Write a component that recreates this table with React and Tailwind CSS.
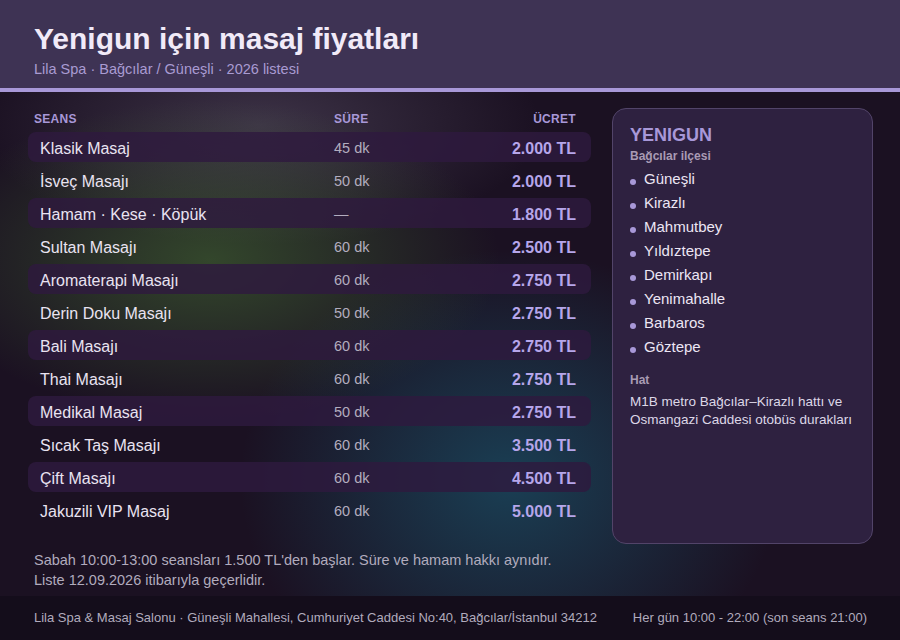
const seanslar = [
  { ad: "Klasik Masaj", sure: "45 dk", ucret: "2.000 TL" },
  { ad: "İsveç Masajı", sure: "50 dk", ucret: "2.000 TL" },
  { ad: "Hamam · Kese · Köpük", sure: "—", ucret: "1.800 TL" },
  { ad: "Sultan Masajı", sure: "60 dk", ucret: "2.500 TL" },
  { ad: "Aromaterapi Masajı", sure: "60 dk", ucret: "2.750 TL" },
  { ad: "Derin Doku Masajı", sure: "50 dk", ucret: "2.750 TL" },
  { ad: "Bali Masajı", sure: "60 dk", ucret: "2.750 TL" },
  { ad: "Thai Masajı", sure: "60 dk", ucret: "2.750 TL" },
  { ad: "Medikal Masaj", sure: "50 dk", ucret: "2.750 TL" },
  { ad: "Sıcak Taş Masajı", sure: "60 dk", ucret: "3.500 TL" },
  { ad: "Çift Masajı", sure: "60 dk", ucret: "4.500 TL" },
  { ad: "Jakuzili VIP Masaj", sure: "60 dk", ucret: "5.000 TL" },
];

const mahalleler = ["Güneşli", "Kirazlı", "Mahmutbey", "Yıldıztepe", "Demirkapı", "Yenimahalle", "Barbaros", "Göztepe"];

export default function App() {
  return (
    <div
      className="w-[900px] h-[640px] flex flex-col overflow-hidden bg-[#1b1122] bg-[radial-gradient(ellipse_290px_160px_at_210px_260px,rgba(80,135,55,0.45),transparent),radial-gradient(ellipse_270px_230px_at_510px_480px,rgba(25,100,125,0.55),transparent),radial-gradient(ellipse_280px_120px_at_260px_125px,rgba(115,105,130,0.38),transparent)]"
      style={{ fontFamily: '"Liberation Sans", Arial, sans-serif' }}
    >
      <header className="h-[88px] shrink-0 bg-[#3e3354] px-[34px] pt-[22px]">
        <h1 className="text-[30px] leading-[34px] font-bold text-[#f1eaf8]">Yenigun için masaj fiyatları</h1>
        <p className="mt-[3px] text-[14.5px] leading-[20px] text-[#a99bd2]">Lila Spa · Bağcılar / Güneşli · 2026 listesi</p>
      </header>
      <div className="h-[4px] shrink-0 bg-[#a898d8]" />

      <main className="flex-1 flex flex-col pl-[28px] pr-[27px] pt-[16px]">
        <div className="flex gap-[21px]">
          <section className="flex-1">
            <div className="flex items-start h-[24px] pt-[3px] pl-[6px] pr-[15px] text-[12px] leading-[16px] font-bold tracking-[0.3px] text-[#a898d8]">
              <span className="w-[300px]">SEANS</span>
              <span className="flex-1">SÜRE</span>
              <span>ÜCRET</span>
            </div>
            <div className="flex flex-col gap-[3px]">
              {seanslar.map((s, i) => (
                <div
                  key={s.ad}
                  className={
                    "flex items-center h-[30px] pt-[4px] pl-3 pr-[15px] rounded-lg " +
                    (i % 2 === 0 ? "bg-[rgba(46,26,62,0.82)]" : "")
                  }
                >
                  <span className="w-[294px] text-[16px] text-[#e9e3f1]">{s.ad}</span>
                  <span className="flex-1 text-[14.5px] text-[#b3adbf]">{s.sure}</span>
                  <span className="text-[16px] font-bold text-[#b6a6ea]">{s.ucret}</span>
                </div>
              ))}
            </div>
          </section>

          <aside className="w-[261px] h-[436px] rounded-[14px] border border-[#524469] bg-[#2e2140] px-[17px] pt-[14px]">
            <h2 className="text-[18px] leading-[24px] font-bold text-[#a898d8]">YENIGUN</h2>
            <p className="mt-px text-[12px] leading-[16px] font-bold text-[#a99bb4]">Bağcılar ilçesi</p>
            <ul className="mt-[3px]">
              {mahalleler.map((m) => (
                <li key={m} className="flex items-center gap-2 h-[24px] text-[15px] text-[#ece6f4]">
                  <span className="w-1.5 h-1.5 mt-[6px] rounded-full bg-[#a898d8] shrink-0" />
                  {m}
                </li>
              ))}
            </ul>
            <p className="mt-[13px] text-[12px] leading-[16px] font-bold text-[#a99bb4]">Hat</p>
            <p className="mt-[5px] text-[13.5px] leading-[18px] text-[#ddd7e7]">
              M1B metro Bağcılar–Kirazlı hattı ve Osmangazi Caddesi otobüs durakları
            </p>
          </aside>
        </div>

        <div className="mt-[6px] pl-[6px] text-[14.5px] leading-[20px] text-[#b1abbd]">
          <p>Sabah 10:00-13:00 seansları 1.500 TL'den başlar. Süre ve hamam hakkı aynıdır.</p>
          <p>Liste 12.09.2026 itibarıyla geçerlidir.</p>
        </div>
      </main>

      <footer className="h-[44px] shrink-0 bg-[#140d1b] flex items-center justify-between pl-[34px] pr-[33px] text-[13px] text-[#b1abbd]">
        <span>Lila Spa &amp; Masaj Salonu · Güneşli Mahallesi, Cumhuriyet Caddesi No:40, Bağcılar/İstanbul 34212</span>
        <span>Her gün 10:00 - 22:00 (son seans 21:00)</span>
      </footer>
    </div>
  );
}
